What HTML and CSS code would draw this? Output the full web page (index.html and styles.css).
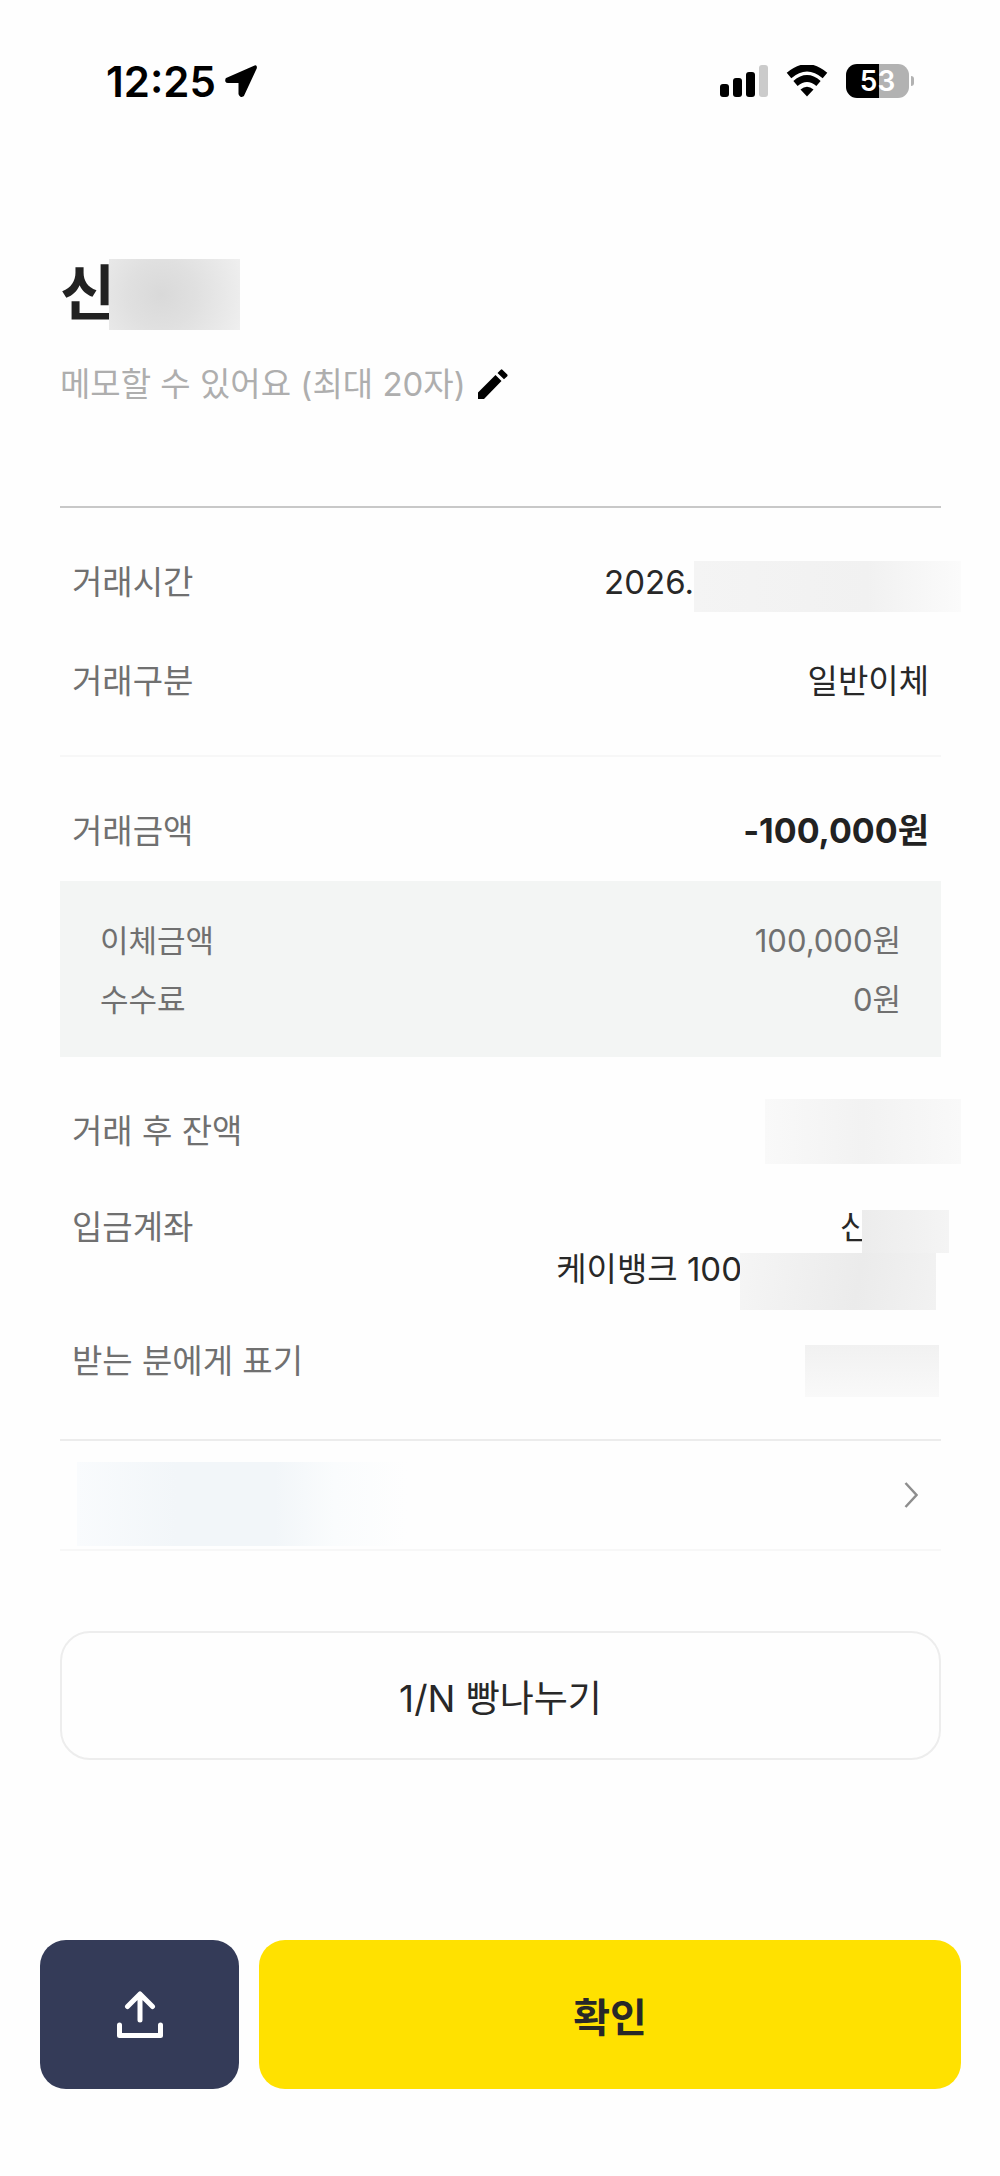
FILE: index.html
```html
<!doctype html>
<html lang="ko">
  <head>
    <meta charset="utf-8">
    <meta name="viewport" content="width=device-width">
    <title>거래내역</title>
    <link rel="stylesheet" href="styles.css">
  </head>
  <body>
    <div class="status">
      <div class="clock">
        <span>12:25</span>
        <svg class="location" viewBox="0 0 34 34"><path d="M31 2.500 L2.500 15 Q1.500 18 4 18 H15.500 V30 Q16.500 33 19 31.500 L31.800 4 Q32.200 2 31 2.500z" fill="#000" stroke="#000" stroke-width="2" stroke-linejoin="round"/></svg>
      </div>
      <div class="indicators">
        <svg class="signal" viewBox="0 0 48 32">
          <rect x="0" y="19" width="9" height="13" rx="3"/>
          <rect x="13" y="13" width="9" height="19" rx="3"/>
          <rect x="26" y="7" width="9" height="25" rx="3"/>
          <rect x="39" y="0" width="9" height="32" rx="3" fill="#cbcbcb"/>
        </svg>
        <svg class="wifi" viewBox="0 0 42 32">
          <path d="M3 10.500 Q21 -5 39 10.500" fill="none" stroke="#000" stroke-width="7"/>
          <path d="M9.500 18.500 Q21 8.500 32.500 18.500" fill="none" stroke="#000" stroke-width="6.500"/>
          <path d="M14.500 24.500 Q21 19 27.500 24.500 L21 31.500z"/>
        </svg>
        <div class="battery"><span>53</span></div>
      </div>
    </div>

    <main>
      <h1>신<span class="mask mask-title"></span></h1>
      <button class="memo">
        메모할 수 있어요 (최대 20자)
        <svg viewBox="0 0 30 30"><path d="M0 23.500 L17.500 6 L23.500 12 L6 30 H0z M19.500 4 L22.800 .700 Q23.600 0 24.400 .700 L29.300 5.600 Q30 6.400 29.300 7.200 L26 10.300z"/></svg>
      </button>

      <dl class="section">
        <div class="row">
          <dt>거래시간</dt>
          <dd>2026.<span class="mask mask-time"></span></dd>
        </div>
        <div class="row">
          <dt>거래구분</dt>
          <dd>일반이체</dd>
        </div>
      </dl>

      <dl class="section amount">
        <div class="row">
          <dt>거래금액</dt>
          <dd class="total">-100,000원</dd>
        </div>
      </dl>
      <dl class="detail">
        <div>
          <dt>이체금액</dt>
          <dd>100,000원</dd>
        </div>
        <div>
          <dt>수수료</dt>
          <dd>0원</dd>
        </div>
      </dl>

      <dl class="section account">
        <div class="row">
          <dt>거래 후 잔액</dt>
          <dd><span class="mask mask-balance"></span></dd>
        </div>
        <div class="row lines">
          <dt>입금계좌</dt>
          <dd>
            <div>신<span class="mask mask-name"></span></div>
            <div>케이뱅크 100<span class="mask mask-number"></span></div>
          </dd>
        </div>
        <div class="row">
          <dt>받는 분에게 표기</dt>
          <dd><span class="mask mask-label"></span></dd>
        </div>
      </dl>

      <a class="more" href="#" aria-label="더보기">
        <span class="mask-link"></span>
        <svg viewBox="0 0 14 26"><path d="M1.500 1 L12.500 13 L1.500 25" fill="none" stroke="#8e8e8e" stroke-width="2.500"/></svg>
      </a>

      <button class="split">1/N 빵나누기</button>
    </main>

    <footer>
      <button class="share" aria-label="공유">
        <svg viewBox="0 0 46 48" fill="none" stroke="#fff" stroke-width="5" stroke-linecap="round" stroke-linejoin="round">
          <path d="M23 29 V3 M10.500 15.500 L23 3 L35.500 15.500"/>
          <path d="M2.500 34 V44.500 H43.500 V34"/>
        </svg>
      </button>
      <button class="confirm">확인</button>
    </footer>
  </body>
</html>
```

FILE: styles.css
```css
* {
  box-sizing: border-box;
}

body {
  margin: 0;
  background: #fefefe;
  color: #282828;
  font-family: Inter, "Noto Sans CJK KR", sans-serif;
  font-size: 33px;
}

button {
  border: 0;
  padding: 0;
  background: none;
  color: inherit;
  font: inherit;
  cursor: pointer;
}

svg {
  display: block;
  flex: none;
}

dl, dd {
  margin: 0;
}

/* status bar */
.status {
  display: flex;
  justify-content: space-between;
  align-items: center;
  height: 162px;
  padding: 0 86px 0 106px;
  color: #000;
}

.clock {
  display: flex;
  align-items: center;
  gap: 8px;
  font-size: 42px;
  font-weight: 600;
}

.location {
  width: 34px;
  height: 34px;
}

.indicators {
  display: flex;
  align-items: center;
  gap: 18px;
}

.signal {
  width: 48px;
  height: 32px;
}

.wifi {
  width: 42px;
  height: 32px;
}

.battery {
  position: relative;
  width: 63px;
  height: 34px;
  margin-right: 5px;
  border-radius: 11px;
  background: linear-gradient(90deg, #000 53%, #b2b2b2 53%);
  color: #fff;
  font-size: 28px;
  font-weight: 600;
  line-height: 34px;
  text-align: center;
}

.battery::after {
  content: "";
  position: absolute;
  top: 12px;
  right: -5px;
  width: 3px;
  height: 10px;
  border-radius: 0 4px 4px 0;
  background: #b2b2b2;
}

/* header */
main {
  padding: 0 59px 0 60px;
}

h1 {
  display: flex;
  height: 72px;
  margin: 97px 0 29px;
  color: #222;
  font-size: 60px;
  font-weight: 700;
  line-height: 68px;
}

.memo {
  display: flex;
  align-items: center;
  gap: 12px;
  height: 48px;
  color: #aeaeae;
  line-height: 48px;
}

.memo svg {
  width: 30px;
  height: 30px;
  fill: #000;
}

/* transaction rows */
.section {
  display: grid;
  gap: 35px;
  padding: 42px 12px;
  border-top: 2px solid #f7f7f7;
}

.memo + .section {
  margin-top: 98px;
  border-color: #c8c8c8;
}

.row {
  display: flex;
  justify-content: space-between;
  align-items: center;
  height: 64px;
  line-height: 48px;
}

.row dt {
  color: #707070;
}

.row dd {
  display: flex;
  align-items: center;
}

.row .total {
  color: #222;
  font-size: 34px;
  font-weight: 700;
}

.amount {
  padding-bottom: 18px;
}

.detail {
  padding: 30px 40px 28px;
  background: #f3f5f4;
  color: #707070;
  font-size: 31px;
  line-height: 59px;
}

.detail div {
  display: flex;
  justify-content: space-between;
}

.account {
  gap: 42px;
  padding-bottom: 46px;
  border-top: 0;
}

.lines {
  height: 82px;
  align-items: flex-start;
  line-height: 44px;
}

.lines dd {
  flex-direction: column;
  align-items: flex-end;
}

.lines dd div {
  display: flex;
  height: 42px;
}

/* blurred out values */
.mask {
  flex: none;
  background: #f2f2f2;
}

.mask-title {
  width: 131px;
  height: 71px;
  margin-left: -6px;
  background: radial-gradient(circle at 40% 50%, #d9d9d9, #e0e0e0 40%, #efefef 100%);
}

.mask-time {
  width: 267px;
  height: 51px;
  margin: 8px -32px 0 0;
  background: linear-gradient(90deg, #f4f4f4, #f1f1f1 65%, #fbfbfb);
}

.mask-balance {
  width: 196px;
  height: 65px;
  margin-right: -32px;
  background: linear-gradient(90deg, #f9f9f9, #f2f2f2 50%, #f9f9f9);
}

.mask-name {
  width: 87px;
  height: 43px;
  margin: 5px -20px 0 -8px;
  background: linear-gradient(90deg, #ececec, #f4f4f4);
}

.mask-number {
  width: 196px;
  height: 57px;
  margin: 6px -7px 0 -2px;
  background: linear-gradient(100deg, #f5f5f5, #ebebeb 60%, #f2f2f2);
}

.mask-label {
  width: 134px;
  height: 52px;
  margin: 20px -10px 0 0;
  background: linear-gradient(#f1f1f1, #f9f9f9);
}

/* link row */
.more {
  display: flex;
  justify-content: space-between;
  align-items: center;
  height: 112px;
  padding: 0 23px 0 17px;
  border-top: 2px solid #ececec;
  border-bottom: 2px solid #f7f7f7;
}

.more svg {
  width: 14px;
  height: 26px;
}

.mask-link {
  width: 330px;
  height: 84px;
  margin-top: 18px;
  background: linear-gradient(90deg, #f9fbfd, #f2f6f9 30%, #f2f6f9 60%, #fafcfd 78%, #fefefe);
}

/* buttons */
.split {
  width: 100%;
  height: 129px;
  margin-top: 80px;
  border: 2px solid #ededed;
  border-radius: 30px;
  font-size: 37px;
}

footer {
  display: flex;
  gap: 20px;
  padding: 180px 39px 86px 40px;
}

.share, .confirm {
  height: 149px;
  border-radius: 26px;
}

.share {
  display: flex;
  justify-content: center;
  align-items: center;
  width: 199px;
  background: #343b58;
}

.share svg {
  width: 46px;
  height: 48px;
}

.confirm {
  flex: 1;
  background: #ffe100;
  font-size: 40px;
  font-weight: 700;
}
```
